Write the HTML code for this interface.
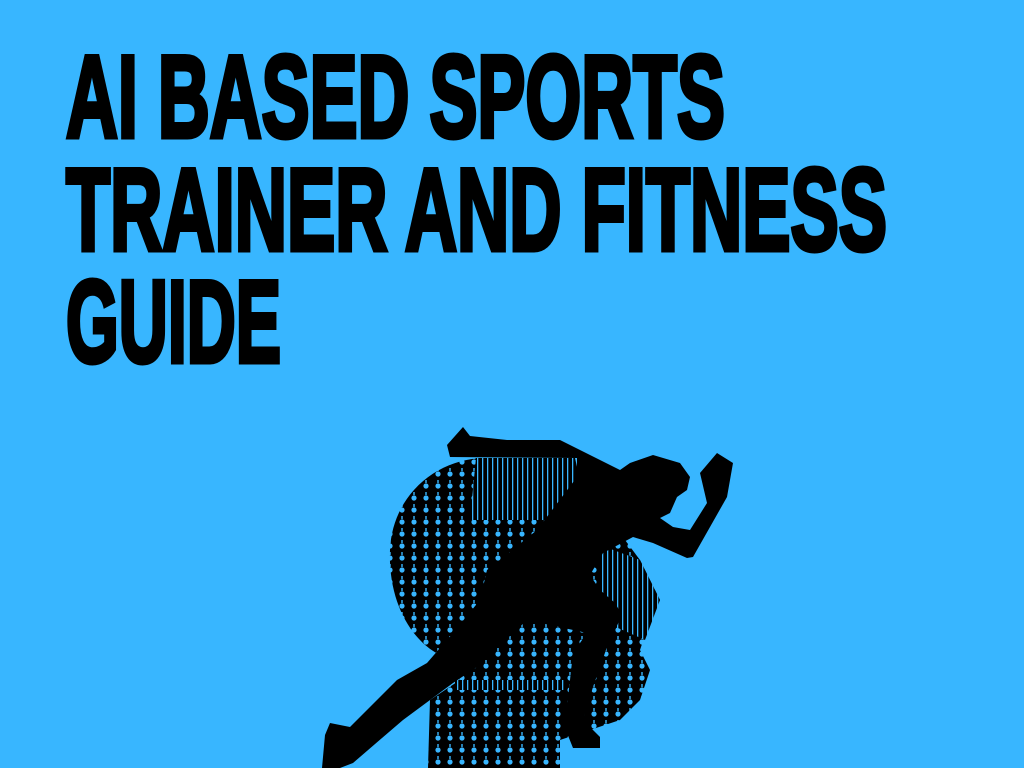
<!DOCTYPE html>
<html><head><meta charset="utf-8"><style>
html,body{margin:0;padding:0;background:#38b6ff;width:1024px;height:768px;overflow:hidden}
svg{display:block}
</style></head><body>
<svg width="1024" height="768" viewBox="0 0 1024 768" xmlns="http://www.w3.org/2000/svg">
<defs>
<pattern id="dots" x="0" y="0" width="12" height="12" patternUnits="userSpaceOnUse">
<rect width="12" height="12" fill="#000"/>
<circle cx="6" cy="6" r="2.6" fill="#38b6ff"/>
<rect x="5.3" y="0" width="1.4" height="3" fill="#38b6ff"/>
</pattern>
<pattern id="lines" x="0" y="0" width="5" height="20" patternUnits="userSpaceOnUse">
<rect width="5" height="20" fill="#000"/>
<rect x="2" y="0" width="1.3" height="20" fill="#38b6ff"/>
</pattern>
</defs>
<rect width="1024" height="768" fill="#38b6ff"/>
<g font-family="'Liberation Sans',sans-serif" font-weight="bold" font-size="117" fill="#000" stroke="#000" stroke-width="5" stroke-linejoin="miter">
<text x="66" y="137" textLength="659" lengthAdjust="spacingAndGlyphs">AI BASED SPORTS</text>
<text x="66" y="250" textLength="821" lengthAdjust="spacingAndGlyphs">TRAINER AND FITNESS</text>
<text x="66" y="362" textLength="215" lengthAdjust="spacingAndGlyphs">GUIDE</text>
</g>
<!-- circuit head -->
<path d="M480,458 C430,462 392,500 390,550 C388,600 410,640 440,655 L460,680 L430,700 L428,768 L560,768 L560,740 L590,730 L620,720 L640,700 L650,670 L640,650 L650,620 L660,600 L640,560 L625,540 L600,520 L575,480 L560,462 Z" fill="url(#dots)"/>
<path d="M476,458 L575,458 L580,480 L545,520 L470,520 Z" fill="url(#lines)"/>
<path d="M600,545 L640,560 L660,600 L645,640 L600,620 Z" fill="url(#lines)"/>
<path d="M455,680 L565,680 L565,690 L455,690 Z" fill="url(#lines)"/>
<!-- runner -->
<path d="M447,445 L463,427 L470,436 L507,440 L560,440 L620,470 L630,463 L653,455 L680,463 L690,477 L687,490 L677,497 L670,513 L660,518 L673,527 L690,530 L707,503 L700,473 L717,453 L733,463 L727,497 L710,527 L693,557 L687,558 L653,543 L633,537 L603,553 L590,575 L600,590 L615,603 L622,615 L607,647 L593,687 L583,720 L600,737 L600,748 L573,748 L567,733 L567,707 L573,653 L587,633 L527,620 L477,667 L453,683 L403,720 L353,763 L340,768 L322,768 L325,735 L330,723 L350,727 L397,680 L427,663 L453,633 L480,600 L487,570 L500,560 L537,530 L577,477 L577,458 L450,457 Z" fill="#000"/>
</svg>
</body></html>
